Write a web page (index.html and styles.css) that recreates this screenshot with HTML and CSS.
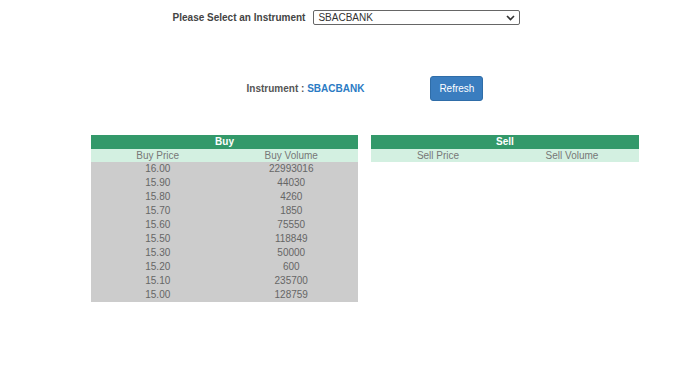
FILE: index.html
```html
<!DOCTYPE html>
<html lang="en">
<head>
    <meta charset="UTF-8">
    <meta name="viewport" content="width=device-width, initial-scale=1.0">
    <title>Market Depth</title>
    <link rel="stylesheet" href="styles.css">
</head>
<body>
    <section id="instrument-select">
        <label for="instrument">Please Select an Instrument</label>
        <div class="select-wrap">
            <select id="instrument">
                <option>SBACBANK</option>
            </select>
            <svg class="chevron" width="9" height="6" viewBox="0 0 9 6">
                <path d="M1 1 L4.5 4.5 L8 1" fill="none" stroke="#333" stroke-width="1.6"/>
            </svg>
        </div>
    </section>

    <section id="depth">
        <div class="instrument-bar">
            <span class="instrument-name">Instrument : <span class="code">SBACBANK</span></span>
            <button id="refresh-button">Refresh</button>
        </div>

        <div class="books">
            <table class="book buy">
                <thead>
                    <tr><th colspan="2">Buy</th></tr>
                    <tr class="sub"><td>Buy Price</td><td>Buy Volume</td></tr>
                </thead>
                <tbody>
                    <tr><td>16.00</td><td>22993016</td></tr>
                    <tr><td>15.90</td><td>44030</td></tr>
                    <tr><td>15.80</td><td>4260</td></tr>
                    <tr><td>15.70</td><td>1850</td></tr>
                    <tr><td>15.60</td><td>75550</td></tr>
                    <tr><td>15.50</td><td>118849</td></tr>
                    <tr><td>15.30</td><td>50000</td></tr>
                    <tr><td>15.20</td><td>600</td></tr>
                    <tr><td>15.10</td><td>235700</td></tr>
                    <tr><td>15.00</td><td>128759</td></tr>
                </tbody>
            </table>

            <table class="book sell">
                <thead>
                    <tr><th colspan="2">Sell</th></tr>
                    <tr class="sub"><td>Sell Price</td><td>Sell Volume</td></tr>
                </thead>
                <tbody>
                </tbody>
            </table>
        </div>
    </section>
</body>
</html>
```

FILE: styles.css
```css
body {
    font-family: "Liberation Sans", Arial, sans-serif;
    font-size: 10px;
    margin: 0;
    padding: 0;
    background-color: #fff;
    color: #333;
}

#instrument-select {
    display: flex;
    justify-content: center;
    align-items: center;
    gap: 8px;
    padding-top: 10px;
    padding-right: 3px;
}

#instrument-select label {
    font-weight: bold;
    color: #444;
}

.select-wrap {
    position: relative;
}

#instrument {
    appearance: none;
    -webkit-appearance: none;
    width: 207px;
    height: 15px;
    padding: 0 0 0 4px;
    border: 1px solid #666;
    border-radius: 2px;
    background-color: #fff;
    font-family: inherit;
    font-size: 10px;
    color: #333;
    display: block;
}

.chevron {
    position: absolute;
    right: 5px;
    top: 5px;
    pointer-events: none;
}

#depth {
    width: 548px;
    margin-left: 91px;
}

.instrument-bar {
    display: flex;
    justify-content: center;
    align-items: center;
    gap: 66px;
    margin-top: 51px;
}

.instrument-name {
    font-weight: bold;
    color: #555;
}

.instrument-name .code {
    color: #2b7bc4;
}

#refresh-button {
    width: 53px;
    height: 25px;
    padding: 0;
    background-color: #3a7dbf;
    color: #fff;
    border: 1px solid #2f6da8;
    border-radius: 3px;
    font-family: inherit;
    font-size: 10px;
    cursor: pointer;
}

.books {
    display: grid;
    grid-template-columns: 267px 268px;
    gap: 13px;
    align-items: start;
    margin-top: 34px;
}

.book {
    width: 100%;
    border-collapse: collapse;
    table-layout: fixed;
}

.book th,
.book td {
    padding: 0;
    text-align: center;
    line-height: 14px;
    height: 14px;
}

.book th {
    background-color: #33996a;
    color: #fff;
    font-weight: bold;
}

.book .sub td {
    background-color: #d3f0e1;
    color: #777;
    height: 13px;
    line-height: 13px;
}

.book tbody td {
    background-color: #cccccc;
    color: #666;
}
```
